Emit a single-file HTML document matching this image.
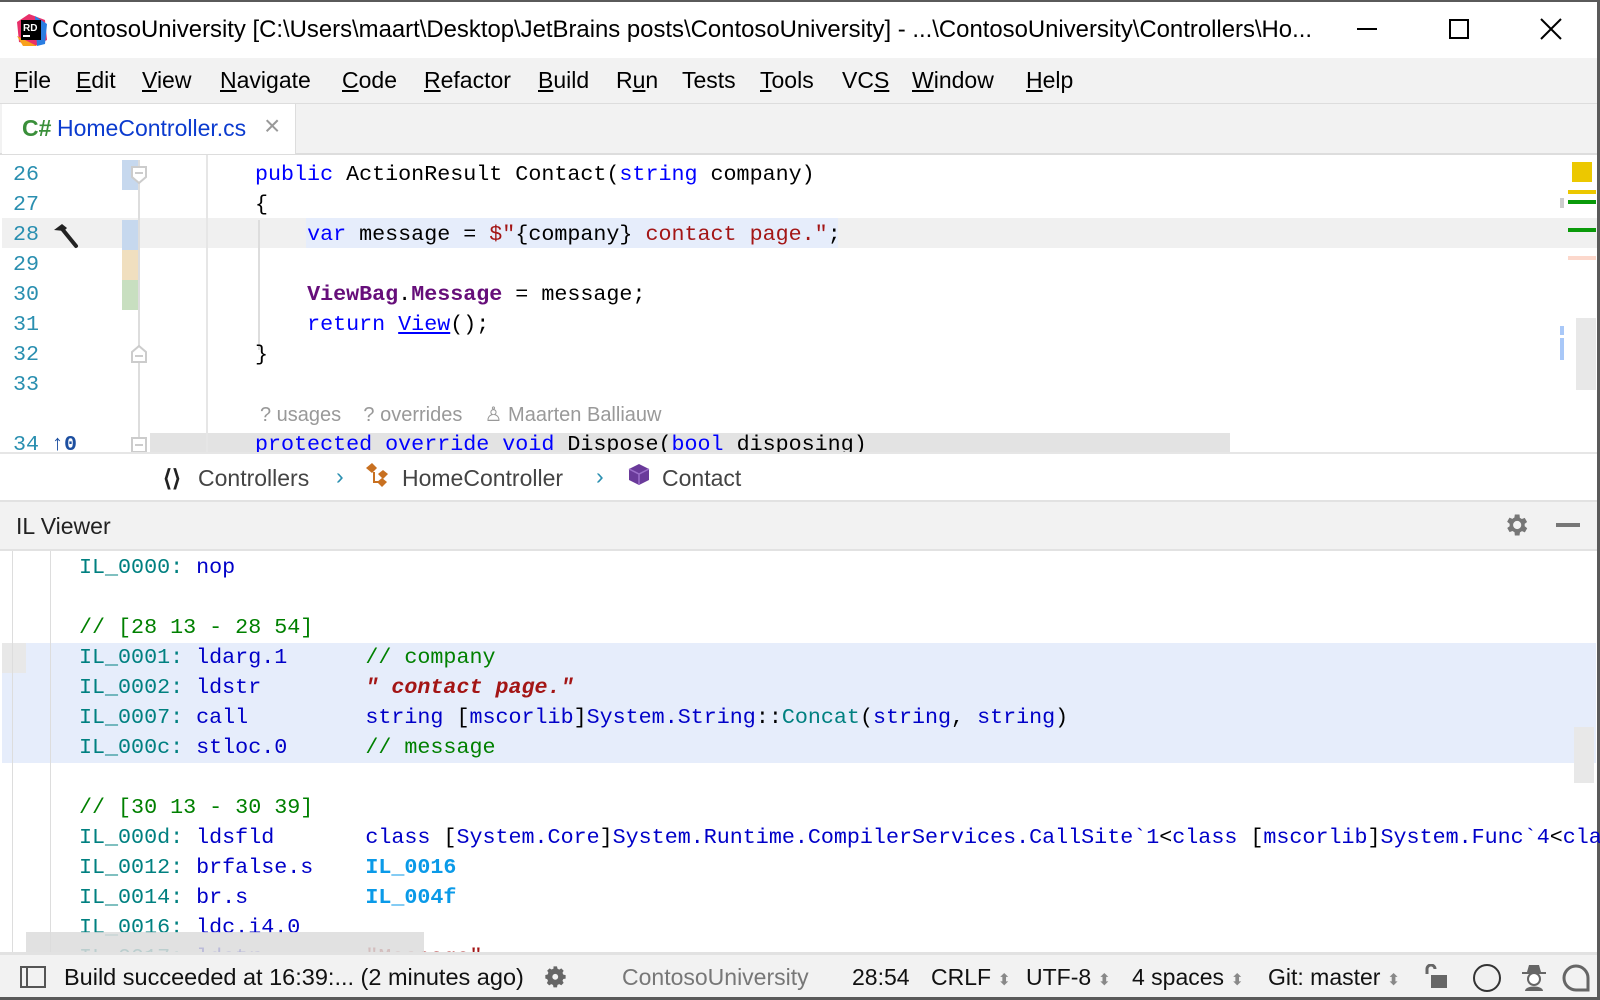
<!DOCTYPE html>
<html><head><meta charset="utf-8"><style>
*{margin:0;padding:0;box-sizing:border-box}
body{width:1600px;height:1000px;overflow:hidden;background:#5a5a5a;font-family:"Liberation Sans",sans-serif;position:relative}
.a{position:absolute;white-space:pre}
.m{font-family:"Liberation Mono",monospace;font-size:21.7px;line-height:30px}
.s{font-size:23px;line-height:30px}
.k{color:#0000ff}.st{color:#a31515}.p{color:#660e7a;font-weight:bold}
.t{color:#008080}.c{color:#008000}.o{color:#0000c8}.j{color:#0a9ae8;font-weight:bold}
.ln{color:#2a8fb0}
u{text-decoration:underline}
</style></head><body>
<div class="a" style="left:0;top:2px;width:1597px;height:995px;background:#fff"></div>
<!-- title -->
<div class="a" style="left:0;top:2px;width:1597px;height:56px;background:#fff"></div>
<svg class="a" style="left:15px;top:14px" width="32" height="32"><polygon points="2,8 14,0 30,6 32,26 20,32 4,28" fill="#e8306a"/><polygon points="20,2 32,10 30,30 22,32" fill="#2a7de1"/><polygon points="2,22 8,32 22,32" fill="#f8a11c"/><rect x="6" y="6" width="20" height="20" fill="#000"/><text x="8" y="17" fill="#fff" font-size="10" font-weight="bold" font-family="Liberation Sans">RD</text><rect x="8" y="21" width="7" height="2" fill="#fff"/></svg>
<div class="a" style="left:52px;top:15px;color:#000;font-size:23.9px;line-height:30px">ContosoUniversity [C:\Users\maart\Desktop\JetBrains posts\ContosoUniversity] - ...\ContosoUniversity\Controllers\Ho...</div>
<div class="a" style="left:1357px;top:28px;width:20px;height:2px;background:#000"></div>
<div class="a" style="left:1449px;top:19px;width:20px;height:20px;border:2px solid #000"></div>
<svg class="a" style="left:1540px;top:18px" width="22" height="22"><path d="M1 1L21 21M21 1L1 21" stroke="#000" stroke-width="2"/></svg>
<!-- menu -->
<div class="a" style="left:0;top:58px;width:1597px;height:45px;background:#f2f2f2"></div>
<div class="a s" style="left:14px;top:65px;color:#000"><u>F</u>ile</div>
<div class="a s" style="left:76px;top:65px"><u>E</u>dit</div>
<div class="a s" style="left:142px;top:65px"><u>V</u>iew</div>
<div class="a s" style="left:220px;top:65px"><u>N</u>avigate</div>
<div class="a s" style="left:342px;top:65px"><u>C</u>ode</div>
<div class="a s" style="left:424px;top:65px"><u>R</u>efactor</div>
<div class="a s" style="left:538px;top:65px"><u>B</u>uild</div>
<div class="a s" style="left:616px;top:65px">R<u>u</u>n</div>
<div class="a s" style="left:682px;top:65px">Tests</div>
<div class="a s" style="left:760px;top:65px"><u>T</u>ools</div>
<div class="a s" style="left:842px;top:65px">VC<u>S</u></div>
<div class="a s" style="left:912px;top:65px"><u>W</u>indow</div>
<div class="a s" style="left:1026px;top:65px"><u>H</u>elp</div>
<!-- tabs -->
<div class="a" style="left:0;top:103px;width:1597px;height:52px;background:#f2f2f2;border-top:1px solid #ddd;border-bottom:2px solid #ddd"></div>
<div class="a" style="left:2px;top:104px;width:294px;height:50px;background:#fff;border-right:1px solid #ddd"></div>
<div class="a s" style="left:22px;top:113px;color:#3a8f3a;font-weight:bold">C#</div>
<div class="a s" style="left:57px;top:113px;color:#0b3bcf">HomeController.cs</div>
<div class="a" style="left:264px;top:110px;color:#999;font-size:28px">×</div>
<!-- editor -->
<div class="a" style="left:2px;top:218px;width:1595px;height:30px;background:#f0f0f0"></div>
<div class="a" style="left:306px;top:218px;width:532px;height:30px;background:#e6edfb"></div>
<div class="a" style="left:150px;top:433px;width:1080px;height:19px;background:#e3e3e3"></div>
<div class="a" style="left:122px;top:160px;width:17px;height:30px;background:#c6d8ee"></div>
<div class="a" style="left:122px;top:220px;width:17px;height:30px;background:#c6d8ee"></div>
<div class="a" style="left:122px;top:250px;width:17px;height:30px;background:#f0dfbf"></div>
<div class="a" style="left:122px;top:280px;width:17px;height:30px;background:#c8dfc0"></div>
<div class="a" style="left:138px;top:160px;width:2px;height:292px;background:#ddd"></div>
<div class="a" style="left:206px;top:155px;width:2px;height:297px;background:#e6e6e6"></div>
<div class="a" style="left:258px;top:220px;width:2px;height:130px;background:#ddd"></div>
<svg class="a" style="left:131px;top:166px" width="16" height="18"><path d="M1 1H15V11L8 17L1 11Z" fill="#fff" stroke="#ccc" stroke-width="2"/><path d="M4 7H12" stroke="#ccc" stroke-width="2"/></svg>
<svg class="a" style="left:131px;top:345px" width="16" height="18"><path d="M1 17H15V7L8 1L1 7Z" fill="#fff" stroke="#ccc" stroke-width="2"/><path d="M4 11H12" stroke="#ccc" stroke-width="2"/></svg>
<svg class="a" style="left:131px;top:437px" width="16" height="15"><rect x="1" y="1" width="14" height="14" fill="#fff" stroke="#ccc" stroke-width="2"/><path d="M4 8H12" stroke="#ccc" stroke-width="2"/></svg>
<svg class="a" style="left:51px;top:222px" width="30" height="28"><path d="M3 8L11 2L16 6L13 9Z" fill="#222"/><path d="M12 8L25 24" stroke="#222" stroke-width="4" stroke-linecap="round"/></svg>
<div class="a m ln" style="left:13px;top:160px">26
27
28
29
30
31
32
33</div>
<div class="a" style="left:0;top:430px;width:1597px;height:22px;overflow:hidden">
<div class="a m ln" style="left:13px;top:0">34</div>
<div class="a m" style="left:51px;top:0;color:#1d4fa0;font-weight:bold">↑0</div>
<div class="a m" style="left:255px;top:0;color:#000"><span class="k">protected</span> <span class="k">override</span> <span class="k">void</span> Dispose(<span class="k">bool</span> disposing)</div>
</div>
<div class="a m" style="left:255px;top:160px;color:#000"><span class="k">public</span> ActionResult Contact(<span class="k">string</span> company)
{
    <span class="k">var</span> message = <span class="st">$"</span>{company}<span class="st"> contact page."</span>;

    <span class="p">ViewBag</span>.<span class="p">Message</span> = message;
    <span class="k">return</span> <u class="k">View</u>();
}</div>
<div class="a" style="left:260px;top:402px;font-size:20px;color:#999;white-space:pre">? usages    ? overrides    ♙ Maarten Balliauw</div>
<div class="a" style="left:0;top:452px;width:1597px;height:2px;background:#e6e6e6"></div>
<!-- right markers -->
<div class="a" style="left:1572px;top:162px;width:20px;height:20px;background:#ecc800"></div>
<div class="a" style="left:1568px;top:190px;width:28px;height:4px;background:#ecc800"></div>
<div class="a" style="left:1560px;top:198px;width:4px;height:10px;background:#ccc"></div>
<div class="a" style="left:1568px;top:200px;width:28px;height:4px;background:#0a9a0a"></div>
<div class="a" style="left:1568px;top:228px;width:28px;height:4px;background:#0a9a0a"></div>
<div class="a" style="left:1568px;top:256px;width:28px;height:4px;background:#fcd8cc"></div>
<div class="a" style="left:1560px;top:326px;width:4px;height:9px;background:#a9c8f8"></div>
<div class="a" style="left:1560px;top:338px;width:4px;height:22px;background:#a9c8f8"></div>
<div class="a" style="left:1576px;top:318px;width:20px;height:72px;background:#e8e8e8"></div>
<!-- breadcrumb -->
<div class="a s" style="left:163px;top:463px;color:#222;font-weight:bold">⟨⟩</div>
<div class="a s" style="left:198px;top:463px;color:#444">Controllers</div>
<div class="a s" style="left:336px;top:461px;color:#2a8fb0">›</div>
<svg class="a" style="left:364px;top:462px" width="30" height="30"><path d="M2 6L8 1L13 6L8 11Z" fill="#c87020"/><path d="M14 12L19 8L24 12L19 17Z" fill="#c87020"/><path d="M13 20L18 16L23 20L18 25Z" fill="#c87020"/><path d="M10 10V20H16" stroke="#c87020" stroke-width="2" fill="none"/></svg>
<div class="a s" style="left:402px;top:463px;color:#444">HomeController</div>
<div class="a s" style="left:596px;top:461px;color:#2a8fb0">›</div>
<svg class="a" style="left:627px;top:463px" width="24" height="24"><path d="M12 1L22 6V17L12 22L2 17V6Z" fill="#6a3a9a"/><path d="M2 6L12 11L22 6M12 11V22" stroke="#9b6ec9" stroke-width="1.5" fill="none"/></svg>
<div class="a s" style="left:662px;top:463px;color:#444">Contact</div>
<!-- IL header -->
<div class="a" style="left:0;top:500px;width:1597px;height:51px;background:#f2f2f2;border-top:2px solid #e2e2e2;border-bottom:2px solid #e2e2e2"></div>
<div class="a s" style="left:16px;top:511px;color:#222">IL Viewer</div>
<svg class="a" style="left:1502px;top:511px" width="28" height="28" viewBox="0 0 24 24"><path fill="#777" d="M19.4 13a7.5 7.5 0 0 0 0-2l2.1-1.6-2-3.5-2.5 1a7 7 0 0 0-1.7-1L15 3h-4l-.4 2.7a7 7 0 0 0-1.7 1l-2.5-1-2 3.5L6.6 11a7.5 7.5 0 0 0 0 2l-2.1 1.6 2 3.5 2.5-1a7 7 0 0 0 1.7 1L11 21h4l.4-2.7a7 7 0 0 0 1.7-1l2.5 1 2-3.5zM13 15.5a3.5 3.5 0 1 1 0-7 3.5 3.5 0 0 1 0 7z"/></svg>
<div class="a" style="left:1556px;top:523px;width:24px;height:4px;background:#777"></div>
<!-- IL code -->
<div class="a" style="left:2px;top:643px;width:1594px;height:120px;background:#e6edfb"></div>
<div class="a" style="left:2px;top:643px;width:24px;height:30px;background:#e8e8e8"></div>
<div class="a" style="left:12px;top:551px;width:1px;height:401px;background:#ddd"></div>
<div class="a" style="left:50px;top:551px;width:1px;height:401px;background:#ddd"></div>
<div class="a m" style="left:79px;top:553px;color:#000;height:399px;overflow:hidden"><span class="t">IL_0000:</span> <span class="o">nop</span>

<span class="c">// [28 13 - 28 54]</span>
<span class="t">IL_0001:</span> <span class="o">ldarg.1</span>      <span class="c">// company</span>
<span class="t">IL_0002:</span> <span class="o">ldstr</span>        <b><i class="st">" contact page."</i></b>
<span class="t">IL_0007:</span> <span class="o">call</span>         <span class="o">string</span> [<span class="o">mscorlib</span>]<span class="o">System.String</span>::<span class="t">Concat</span>(<span class="o">string</span>, <span class="o">string</span>)
<span class="t">IL_000c:</span> <span class="o">stloc.0</span>      <span class="c">// message</span>

<span class="c">// [30 13 - 30 39]</span>
<span class="t">IL_000d:</span> <span class="o">ldsfld</span>       <span class="o">class</span> [<span class="o">System.Core</span>]<span class="o">System.Runtime.CompilerServices.CallSite`1</span>&lt;<span class="o">class</span> [<span class="o">mscorlib</span>]<span class="o">System.Func`4</span>&lt;<span class="o">cla</span>
<span class="t">IL_0012:</span> <span class="o">brfalse.s</span>    <span class="j">IL_0016</span>
<span class="t">IL_0014:</span> <span class="o">br.s</span>         <span class="j">IL_004f</span>
<span class="t">IL_0016:</span> <span class="o">ldc.i4.0</span>
<span class="t">IL_0017:</span> <span class="o">ldstr</span>        <span class="st">"Message"</span></div>
<div class="a" style="left:26px;top:932px;width:398px;height:20px;background:rgba(220,220,220,0.85)"></div>
<div class="a" style="left:1574px;top:727px;width:20px;height:56px;background:#e8e8e8"></div>
<!-- status -->
<div class="a" style="left:0;top:952px;width:1597px;height:45px;background:#f2f2f2;border-top:3px solid #e2e2e2"></div>
<svg class="a" style="left:20px;top:966px" width="26" height="22"><rect x="1" y="1" width="24" height="20" fill="none" stroke="#555" stroke-width="2"/><path d="M7 1V21" stroke="#555" stroke-width="2"/></svg>
<div class="a s" style="left:64px;top:962px;color:#111;font-size:23.5px">Build succeeded at 16:39:... (2 minutes ago)</div>
<svg class="a" style="left:542px;top:964px" width="30" height="28" viewBox="0 0 24 24"><path fill="#666" d="M9 2h3l.4 2 1.5.8 1.8-1 2 2-1 1.8.7 1.5 2 .4v3l-2 .4-.7 1.5 1 1.8-2 2-1.8-1-1.5.7L12 20H9l-.4-2-1.5-.7-1.8 1-2-2 1-1.8L3.6 13 2 12.4v-3L4 9l.6-1.5-1-1.8 2-2 1.8 1L9 4z"/><circle cx="10.5" cy="11" r="2.5" fill="#f2f2f2"/></svg>
<div class="a s" style="left:622px;top:962px;color:#777">ContosoUniversity</div>
<div class="a s" style="left:852px;top:962px;color:#111">28:54</div>
<div class="a s" style="left:931px;top:962px;color:#111">CRLF <span style="color:#888;font-size:16px">⬍</span></div>
<div class="a s" style="left:1026px;top:962px;color:#111">UTF-8 <span style="color:#888;font-size:16px">⬍</span></div>
<div class="a s" style="left:1132px;top:962px;color:#111">4 spaces <span style="color:#888;font-size:16px">⬍</span></div>
<div class="a s" style="left:1268px;top:962px;color:#111">Git: master <span style="color:#888;font-size:16px">⬍</span></div>
<svg class="a" style="left:1424px;top:964px" width="24" height="26"><path d="M3 10V5a4 4 0 0 1 8 0" stroke="#666" stroke-width="3" fill="none"/><rect x="7" y="11" width="16" height="13" fill="#666"/></svg>
<div class="a" style="left:1473px;top:964px;width:28px;height:28px;border:2px solid #333;border-radius:50%;background:#f0f0f0"></div>
<svg class="a" style="left:1521px;top:964px" width="26" height="28"><path d="M6 8L8 1H18L20 8H25V10H1V8Z" fill="#666"/><circle cx="13" cy="15" r="6" fill="#fff" stroke="#666" stroke-width="2"/><path d="M4 27C4 21 22 21 22 27Z" fill="#666"/></svg>
<svg class="a" style="left:1562px;top:964px" width="28" height="28"><path d="M26 26H14A12 12 0 1 1 26 14Z" fill="none" stroke="#666" stroke-width="3"/></svg>
</body></html>
